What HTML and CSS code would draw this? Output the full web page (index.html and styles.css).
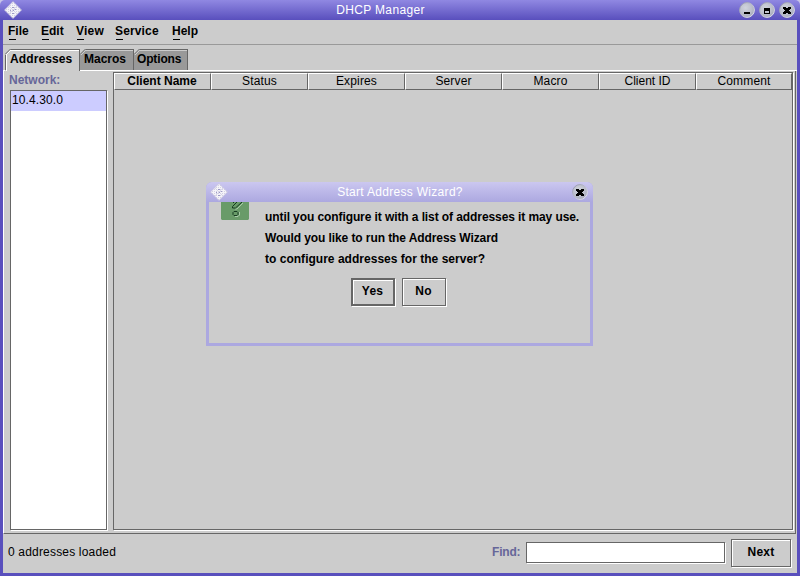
FILE: index.html
```html
<!DOCTYPE html>
<html lang="en">
<head>
<meta charset="utf-8">
<title>DHCP Manager</title>
<link rel="stylesheet" href="styles.css">
</head>
<body>
<svg class="defs" width="0" height="0">
  <defs>
    <radialGradient id="ball" cx="40%" cy="35%" r="65%"><stop offset="0" stop-color="#d0d3dd"/><stop offset=".7" stop-color="#babdca"/><stop offset="1" stop-color="#a5a8bd"/></radialGradient>
    <linearGradient id="rim" x1="0" y1="0" x2="1" y2="1"><stop offset="0" stop-color="#8d90a6"/><stop offset="1" stop-color="#eeeef6"/></linearGradient>
    <pattern id="weave" width="2" height="2" patternUnits="userSpaceOnUse"><rect width="2" height="2" fill="#f4f3f8"/><rect width="1" height="1" fill="#d3d1e4"/></pattern>
    <symbol id="gem" viewBox="0 0 18 18">
      <path d="M9 .5 17.5 9 9 17.5.5 9z" fill="url(#weave)" stroke="#c5c1de" stroke-width=".7"/>
      <path d="M5 5l8 8M13 5l-8 8" stroke="#d2cfe4" stroke-width=".8"/>
      <path d="M8 6h2v1H8zM6 9h1v1H6zM9 9h1v1H9zM11 8h1v1h-1zM8 12h2v1H8z" fill="#9c99c6"/>
    </symbol>
    <symbol id="min" viewBox="0 0 16 16"><circle cx="8" cy="8" r="7.4" fill="url(#ball)" stroke="url(#rim)"/><path d="M5 10h6v2H5z"/></symbol>
    <symbol id="max" viewBox="0 0 16 16"><circle cx="8" cy="8" r="7.4" fill="url(#ball)" stroke="url(#rim)"/><path fill-rule="evenodd" d="M5 6h6v6H5zM6 9v2h4V9z"/></symbol>
    <symbol id="close" viewBox="0 0 16 16"><circle cx="8" cy="8" r="7.4" fill="url(#ball)" stroke="url(#rim)"/><path d="M4 5h3v1h2V5h3v2h-1v1h-1v1h1v1h1v2H9v-1H7v1H4v-2h1V9h1V8H5V7H4z"/></symbol>
  </defs>
</svg>
<div class="window">
  <header class="titlebar">
    <svg class="gem" width="18" height="18"><use href="#gem"/></svg>
    <span class="title">DHCP Manager</span>
    <div class="controls">
      <svg width="16" height="16"><use href="#min"/></svg>
      <svg width="16" height="16"><use href="#max"/></svg>
      <svg width="16" height="16"><use href="#close"/></svg>
    </div>
  </header>
  <nav class="menu">
    <span class="file">File</span><span class="edit">Edit</span><span class="view">View</span><span class="service">Service</span><span class="help">Help</span>
  </nav>
  <div class="tabs">
    <div class="tab active"><svg width="6" height="6"><path d="M0 0h6L0 6z" fill="#ccc"/><path d="M0 5.5 5.5 0" stroke="#666"/><path d="M1 6 6 1" stroke="#fff"/></svg><span>Addresses</span></div>
    <div class="tab macros"><svg width="6" height="6"><path d="M0 0h6L0 6z" fill="#ccc"/><path d="M0 5.5 5.5 0" stroke="#666"/><path d="M1 6 6 1" stroke="#ccc"/></svg><span>Macros</span></div>
    <div class="tab options"><svg width="6" height="6"><path d="M0 0h6L0 6z" fill="#ccc"/><path d="M0 5.5 5.5 0" stroke="#666"/><path d="M1 6 6 1" stroke="#ccc"/></svg><span>Options</span></div>
    <div class="tabline"></div>
  </div>
  <main class="panel">
    <aside class="side">
      <div class="label">Network:</div>
      <div class="list etched"><div class="row">10.4.30.0</div></div>
    </aside>
    <section class="table etched">
      <div class="head">
        <div class="sorted">Client Name</div><div>Status</div><div>Expires</div><div>Server</div><div>Macro</div><div class="tight">Client ID</div><div>Comment</div>
      </div>
    </section>
  </main>
  <footer class="status">
    <span class="message">0 addresses loaded</span>
    <span class="find">Find:</span>
    <div class="field etched"></div>
    <div class="button next">Next</div>
  </footer>
</div>
<div class="dialog">
  <header class="dialog-title">
    <svg class="gem" width="18" height="18"><use href="#gem"/></svg>
    <span>Start Address Wizard?</span>
    <svg class="dialog-close" width="16" height="16"><use href="#close"/></svg>
  </header>
  <div class="dialog-content">
    <svg class="question" width="28" height="18"><path d="M0 0h28v17l-1 1H1l-1-1z" fill="#699b69"/><path d="M14 14.500h3l1.500-1.500v-3M14 7h2l6-6" fill="none" stroke="#b8d5b8" stroke-width=".8"/><g fill="none" stroke="#153b20"><path d="M16 0l-4.500 4.500v1.500h3L21 0M12.500 0v1"/><path d="M13 9.500h3l1 1v2l-1 1h-3l-1-1v-2z"/></g></svg>
    <div class="copy"><p>until you configure it with a list of addresses it may use.</p><p>Would you like to run the Address Wizard</p><p class="wide">to configure addresses for the server?</p></div>
  </div>
  <div class="actions"><div class="button default">Yes</div><div class="button no">No</div></div>
</div>
</body>
</html>
```
FILE: styles.css
```css
* { box-sizing: border-box; }
body { margin: 0; width: 800px; height: 576px; overflow: hidden; position: relative; background: #c8c5e8; color: #000; font: 12px/14px "Liberation Sans", Arial, sans-serif; }
p { margin: 0; }
svg { display: block; flex: none; }
.defs { position: absolute; }
.window { width: 800px; height: 576px; display: flex; flex-direction: column; background: linear-gradient(#9088e2, #594fbd 20px); border-radius: 5px 5px 0 0; padding: 0 3px 3px; }
.titlebar { height: 20px; flex: none; display: flex; align-items: flex-start; padding: 1px 2px 0 1px; color: #fff; }
.title { flex: 1; text-align: center; padding: 2px 0 0; letter-spacing: .35px; }
.controls { display: flex; gap: 4px; padding-top: 1px; }
.menu { height: 25px; flex: none; display: flex; background: #ccc; border-bottom: 1px solid #999; padding: 4px 5px 0; font-weight: bold; }
.menu span { background: linear-gradient(#000, #000) 1px 15px / 7px 1px no-repeat; height: 18px; }
.file { width: 33px; } .edit { width: 35px; } .view { width: 39px; letter-spacing: .2px; } .service { width: 57px; letter-spacing: .15px; }
.tabs { height: 26px; flex: none; display: flex; background: linear-gradient(#fff, #fff) 0 25px / 3px 1px no-repeat #ccc; padding: 4px 0 0 2px; font-weight: bold; }
.tab { height: 21px; border-top: 1px solid #666; border-right: 1px solid #666; background: #999; box-shadow: inset 0 1px #ccc; display: flex; }
.tab svg { margin-top: -1px; }
.tab span { padding-top: 2px; margin-left: -2px; white-space: nowrap; }
.active { width: 75px; height: 22px; background: linear-gradient(#666, #666) 0 5px / 1px 15px no-repeat, linear-gradient(#fff, #fff) 1px 5px / 1px 17px no-repeat #ccc; box-shadow: inset 0 1px #fff; letter-spacing: .1px; }
.active span { margin-left: -1px; }
.macros { width: 54px; }
.options { width: 54px; letter-spacing: -.15px; }
.options span { margin-left: -3px; }
.tabline { flex: 1; height: 1px; margin-top: 21px; background: #fff; margin-left: -108px; }
.panel { flex: 1; min-height: 0; background: #ccc; border-left: 1px solid #fff; border-right: 1px solid #666; border-bottom: 1px solid #666; margin-right: 1px; box-shadow: 1px 0 #ccc; padding: 1px 2px 3px 6px; display: flex; gap: 6px; }
.side { width: 97px; flex: none; display: flex; flex-direction: column; }
.label { height: 18px; padding-top: 1px; margin-left: -1px; color: #669; font-weight: bold; }
.etched { border: 1px solid #666; box-shadow: 1px 1px #fff; }
.list { flex: 1; background: #fff; }
.row { height: 20px; padding: 2px 1px; background: #ccf; letter-spacing: .1px; }
.table { flex: 1; min-width: 0; }
.head { display: grid; grid-template-columns: repeat(6, 97px) 96px; height: 17px; }
.head div { border: 1px solid; border-color: #fff #666 #666 #fff; text-align: center; line-height: 14px; height: 17px; letter-spacing: .15px; }
.head .sorted { font-weight: bold; letter-spacing: 0; padding-right: 1px; }
.head .tight { letter-spacing: 0; }
.status { height: 39px; flex: none; background: #ccc; display: flex; align-items: flex-start; padding: 5px 6px 0 5px; }
.message { flex: 1; padding-top: 6px; letter-spacing: .18px; }
.find { width: 34px; padding-top: 6px; color: #669; font-weight: bold; letter-spacing: -.2px; }
.field { width: 199px; height: 21px; margin: 3px 6px 0 0; background: #fff; }
.button { border: 1px solid #666; box-shadow: 1px 1px #fff, inset 1px 1px #fff; font-weight: bold; text-align: center; height: 28px; line-height: 24px; letter-spacing: .2px; }
.next { width: 60px; }
.dialog { position: absolute; left: 206px; top: 182px; width: 387px; height: 164px; background: #ccc; border: solid #aca8e0; border-width: 0 3px 3px; border-radius: 6px 6px 0 0; }
.dialog-title { height: 20px; display: flex; margin: 0 -3px; padding: 1px 5px 0 4px; color: #fff; background: linear-gradient(#cbc7f0, #aca8e0); border-radius: 6px 6px 0 0; }
.dialog-title span { flex: 1; text-align: center; padding: 2px 0 0; letter-spacing: .3px; }
.dialog-close { margin-top: 1px; }
.dialog-content { display: flex; gap: 16px; padding-left: 12px; height: 76px; }
.copy { font-weight: bold; padding-top: 5px; line-height: 21px; letter-spacing: -.09px; white-space: nowrap; }
.copy .wide { letter-spacing: .02px; }
.actions { display: flex; gap: 7px; padding-left: 142px; }
.actions .button { width: 44px; padding-right: 1px; }
.actions .default { border-width: 2px; line-height: 22px; }
```
